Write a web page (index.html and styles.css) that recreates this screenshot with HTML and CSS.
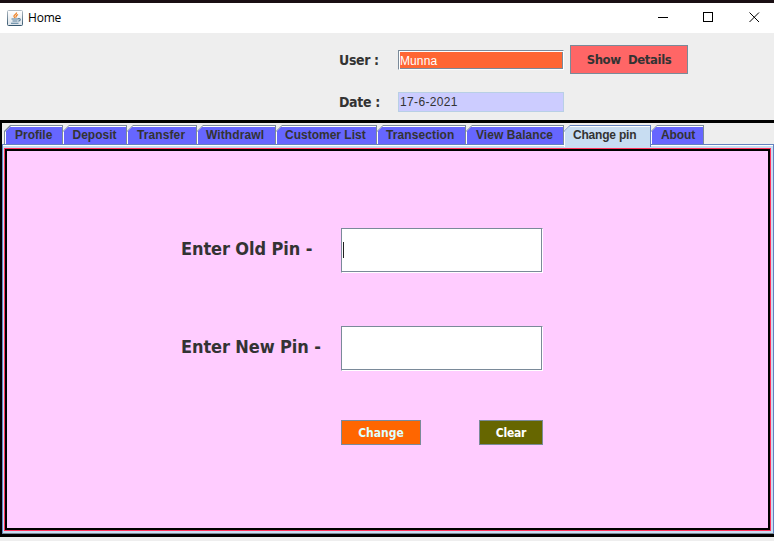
FILE: index.html
```html
<!DOCTYPE html>
<html lang="en">
<head>
<meta charset="utf-8">
<title>Home</title>
<link rel="stylesheet" href="styles.css">
</head>
<body>
<header class="titlebar">
  <svg class="logo" width="16" height="16" viewBox="0 0 16 16">
    <defs><linearGradient id="face" x2="0" y2="1"><stop stop-color="#fff"/><stop offset="1" stop-color="#dde4ea"/></linearGradient>
    <linearGradient id="edge" x2="0" y2="1"><stop stop-color="#b0bbc4"/><stop offset="1" stop-color="#35566e"/></linearGradient></defs>
    <rect x=".5" y=".5" width="15" height="15" rx="1" fill="url(#face)" stroke="url(#edge)"/>
    <path d="M9.500 2.500C10 4.500 6.500 4.500 7 6.500L8 8M11 4.500C9 5.500 8.500 6 9.200 7.500" fill="none" stroke="#ee8328" stroke-width="1.300"/>
    <path d="M4.500 9h7M5.500 11h5M4 13.300h7.500M11 8.800c3-.8 3 2 .3 2.300" fill="none" stroke="#527b98" stroke-width="1.100"/>
  </svg>
  <span class="title">Home</span>
  <svg class="controls" width="104" height="12" viewBox="0 0 104 12" fill="none" stroke="#000">
    <path d="M1 6.500h10M46.500 1.500h9v9h-9z" shape-rendering="crispEdges"/>
    <path d="M92.500 1.500l9.500 9.500M102 1.500L92.500 11"/>
  </svg>
</header>
<section class="info">
  <div class="row">
    <span class="label">User :</span>
    <div class="user"><span>Munna</span></div>
    <button class="details">Show&nbsp; Details</button>
  </div>
  <div class="row date-row">
    <span class="label">Date :</span>
    <div class="date">17-6-2021</div>
  </div>
</section>
<main class="frame">
  <nav class="tabs">
    <div class="tab profile"><span>Profile</span></div>
    <div class="tab deposit"><span>Deposit</span></div>
    <div class="tab transfer"><span>Transfer</span></div>
    <div class="tab withdraw"><span>Withdrawl</span></div>
    <div class="tab customers"><span>Customer List</span></div>
    <div class="tab transaction"><span>Transection</span></div>
    <div class="tab balance"><span>View Balance</span></div>
    <div class="tab pin active"><span>Change pin</span></div>
    <div class="tab about"><span>About</span></div>
  </nav>
  <div class="pane"><div class="red"><div class="panel">
    <div class="field-row">
      <span class="prompt">Enter Old Pin -</span>
      <div class="field"><i class="caret"></i></div>
    </div>
    <div class="field-row second">
      <span class="prompt">Enter New Pin -</span>
      <div class="field"></div>
    </div>
    <div class="actions">
      <button class="change">Change</button>
      <button class="clear">Clear</button>
    </div>
  </div></div></div>
</main>
</body>
</html>
```

FILE: styles.css
```css
* { box-sizing: border-box; }
body {
  margin: 0;
  width: 774px;
  height: 541px;
  overflow: hidden;
  background: #eee;
  color: #333;
  font-family: "Liberation Sans", sans-serif;
}
.titlebar {
  height: 33px;
  border-top: 3px solid #190f13;
  background: #fff;
  display: flex;
  align-items: center;
  padding: 0 13px 0 7px;
}
.logo { margin-top: -1px; }
.title {
  margin-left: 5px;
  color: #000;
  font: 12px/16px "Open Sans", sans-serif;
  letter-spacing: -0.2px;
}
.controls { margin-left: auto; margin-top: -2px; }
.info { height: 87px; padding: 12px 0 0 339px; }
.row { display: flex; height: 29px; }
.label {
  width: 59px;
  font: bold 14px/30px "DejaVu Sans Condensed", "DejaVu Sans", sans-serif;
  letter-spacing: -0.35px;
}
.user {
  width: 166px;
  height: 20px;
  margin-top: 5px;
  border: 1px solid #7a8a99;
  border-right-color: #fff;
  border-bottom-color: #fff;
  background: #fff;
  padding-top: 1px;
}
.user span {
  display: block;
  height: 17px;
  margin-left: 1px;
  border-right: 1px solid #7a8a99;
  border-bottom: 1px solid #7a8a99;
  background: #f63;
  color: #fff;
  font-size: 12px;
  letter-spacing: 0.1px;
  line-height: 18px;
}
button {
  border: 1px solid #7a8a99;
  padding: 0;
  font: bold 12px "DejaVu Sans Condensed", "DejaVu Sans", sans-serif;
  letter-spacing: -0.25px;
}
.details {
  width: 118px;
  height: 29px;
  margin-left: 6px;
  background: #f66;
  color: #333;
  font-size: 13px;
  letter-spacing: -0.4px;
}
.date-row { margin-top: 13px; }
.date {
  width: 166px;
  height: 20px;
  margin-top: 5px;
  padding-left: 1px;
  border: 1px solid #b8cfe5;
  background: #ccf;
  font-size: 12px;
  letter-spacing: 0.35px;
  line-height: 19px;
}
.frame {
  height: 417px;
  border: solid #000;
  border-width: 3px 0 3px 2px;
}
.tabs { display: flex; height: 21px; padding: 2px 0 0 2px; }
.tab {
  --face: #66f;
  position: relative;
  height: 19px;
  background: #7a8a99;
  clip-path: polygon(6px 0, 100% 0, 100% 100%, 0 100%, 0 6px);
  font: bold 12px/19px "Liberation Sans", sans-serif;
  white-space: nowrap;
}
.tab::before, .tab::after {
  content: "";
  position: absolute;
  inset: 1px 1px 0 0;
  background: #fff;
  clip-path: polygon(6px 0, 100% 0, 100% 100%, 0 100%, 0 6px);
}
.tab::after {
  inset: 2px 1px 0 1px;
  background: var(--face);
  clip-path: polygon(4px 0, 100% 0, 100% 100%, 0 100%, 0 4px);
}
.tab span { position: relative; z-index: 1; display: block; padding-left: 9px; line-height: 20px; }
.profile { width: 59px; }
.profile::before { left: 1px; }
.profile::after { left: 2px; }
.profile span { padding-left: 11px; }
.deposit { width: 64px; }
.deposit span { padding-left: 9.5px; }
.transfer { width: 70px; }
.transfer span { padding-left: 10px; letter-spacing: 0.1px; }
.withdraw { width: 79px; }
.withdraw span { letter-spacing: 0.1px; }
.customers { width: 101px; }
.transaction { width: 89px; }
.transaction span { letter-spacing: 0.1px; }
.balance { width: 98px; }
.balance span { padding-left: 10px; letter-spacing: 0.05px; }
.pin { width: 87px; }
.pin span { letter-spacing: -0.2px; }
.about { width: 53px; }
.about span { padding-left: 10px; letter-spacing: -0.1px; }
.active { --face: #c8ddf2; height: 22px; z-index: 2; background: #6382bf; }
.pane {
  height: 390px;
  border: 1px solid #6382bf;
  border-bottom-color: #7a8a99;
  background: #c8ddf2;
  padding: 3px 2px 2px 1px;
  box-shadow: inset 0 1px #fff;
}
.red { height: 383px; border: 1px solid #ff335c; }
.panel {
  height: 381px;
  border: 2px solid #000;
  background: #fcf;
  padding: 77px 0 0 174px;
}
.field-row { display: flex; height: 45px; }
.second { margin-top: 53px; }
.prompt {
  width: 160px;
  font: bold 18px/42px "DejaVu Sans Condensed", "DejaVu Sans", sans-serif;
  letter-spacing: -0.1px;
  white-space: nowrap;
}
.field {
  width: 202px;
  height: 45px;
  border: 1px solid #7a8a99;
  border-bottom-color: #fff;
  border-right-color: #fff;
  background: #fff;
  box-shadow: inset -1px -1px #7a8a99;
  padding: 13px 0 0 1px;
}
.caret { display: block; width: 1px; height: 16px; background: #222; }
.actions { display: flex; margin-top: 49px; }
.actions button { height: 25px; }
.change { width: 80px; margin-left: 160px; background: #f60; color: #dff; letter-spacing: 0; }
.clear { width: 64px; margin-left: 58px; background: #660; color: #fff; }
```
